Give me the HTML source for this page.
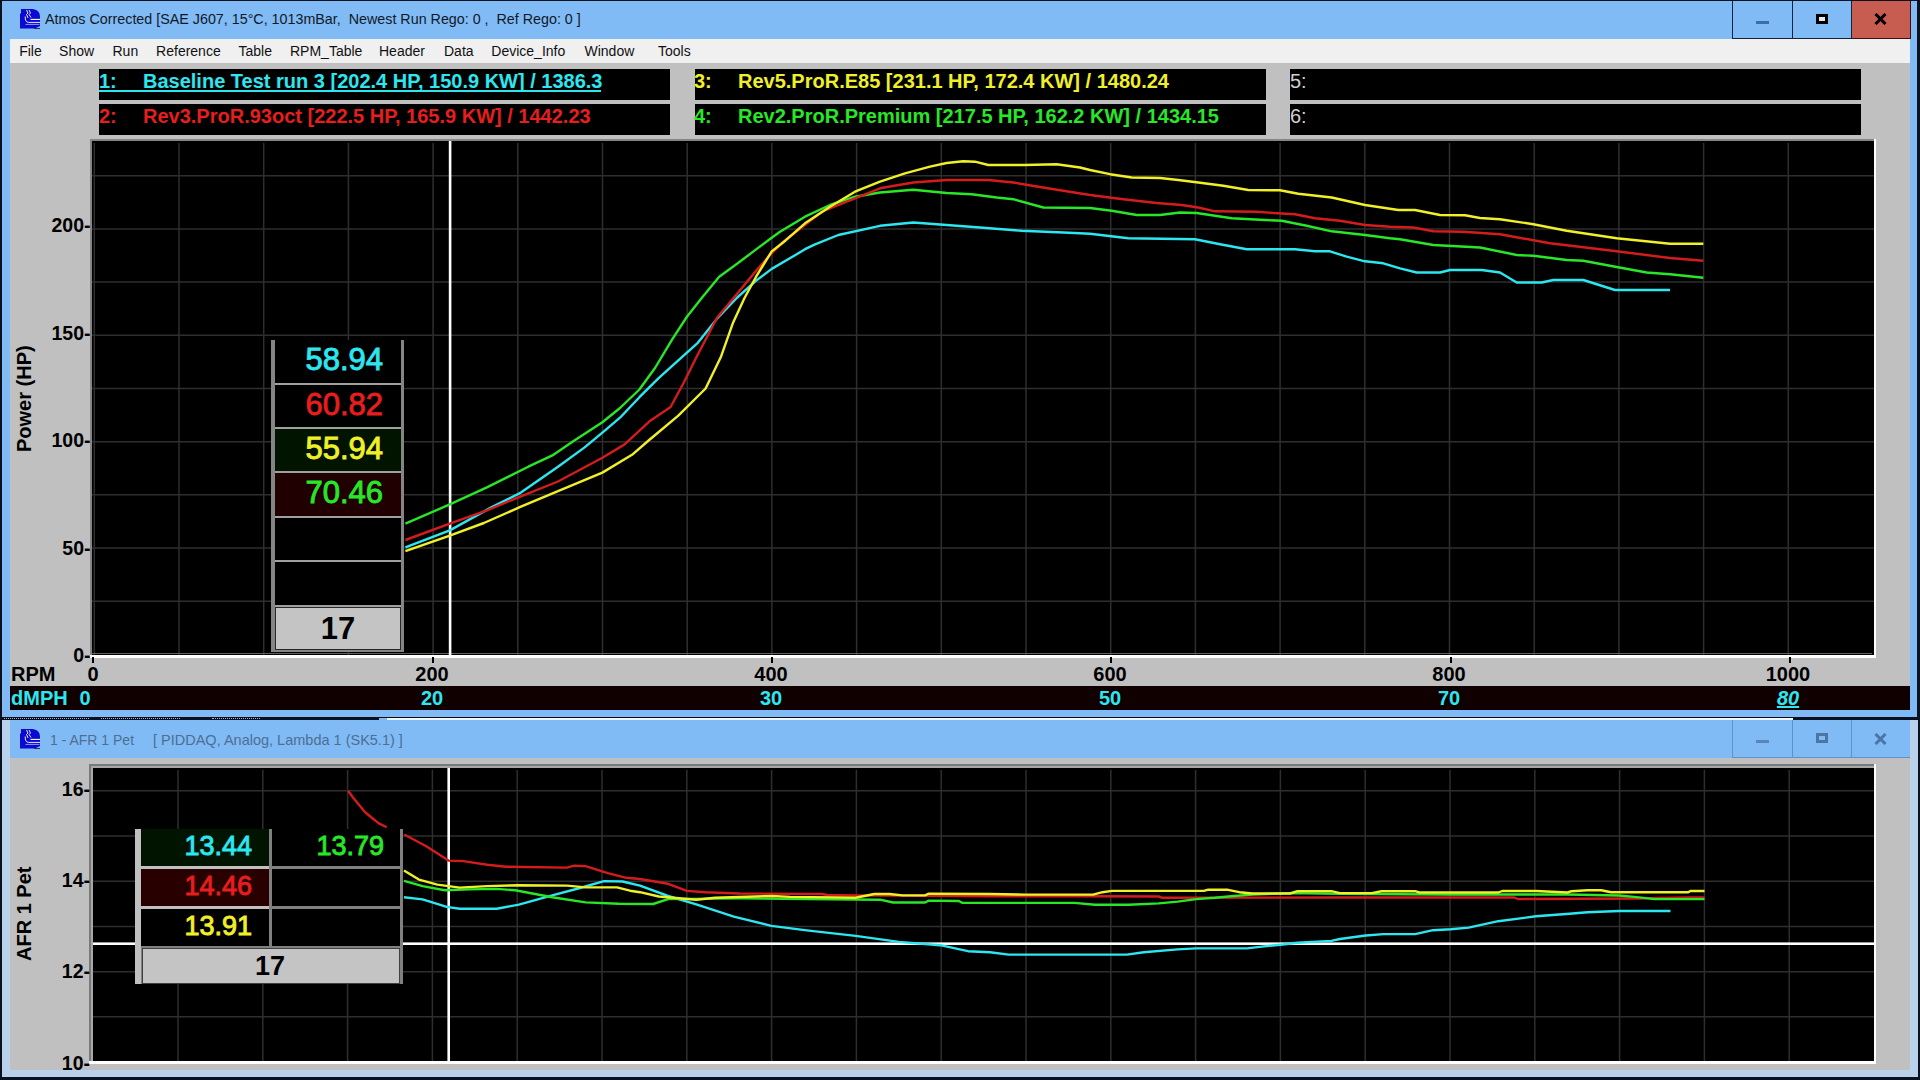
<!DOCTYPE html>
<html><head><meta charset="utf-8"><title>Dyno</title>
<style>
*{margin:0;padding:0;box-sizing:border-box}
html,body{width:1920px;height:1080px;overflow:hidden;background:#0a1220;font-family:"Liberation Sans",sans-serif}
.a{position:absolute}
.t{position:absolute;white-space:pre;line-height:1}
</style></head><body>

<div class="a" style="left:0;top:0;width:1920px;height:720px;background:#0a1220"></div>
<div class="a" style="left:2px;top:1px;width:1915px;height:716px;background:#80bbf6"></div>
<div class="a" style="left:10px;top:39px;width:1900px;height:24px;background:#f0f0f0"></div>
<div class="a" style="left:10px;top:63px;width:1900px;height:623px;background:#c0c0c0"></div>
<div class="a" style="left:10px;top:686px;width:1900px;height:24px;background:#100000"></div>
<div class="a" style="left:0;top:717px;width:1920px;height:3px;background:#0a1020"></div>
<div class="a" style="left:387px;top:718px;width:1406px;height:2px;background:#f4f8fc"></div>
<div class="a" style="left:379px;top:718px;width:8px;height:2px;background:#8ab8e8"></div>
<div class="a" style="left:4px;top:718px;width:85px;height:1px;border-top:1px dotted #a8b0c0"></div>
<div class="a" style="left:101px;top:718px;width:79px;height:1px;border-top:1px dotted #a8b0c0"></div>
<div class="a" style="left:212px;top:718px;width:48px;height:1px;border-top:1px dotted #a8b0c0"></div>
<svg class="a" style="left:20px;top:9px" width="20" height="20" viewBox="0 0 20 20">
<path d="M1,0 L13,0 Q20,1 20,8 L20,17 L15,19.6 L0,19.6 L0,4.5 L1,4.5 Z" fill="#0a0ad2"/>
<path d="M6.5,1 L8,4 L6.5,5.5 L8,9 M9,1 L10.5,4 L9,5.5 L11,8.5" stroke="#fff" stroke-width="1" fill="none" opacity="0.9"/>
<path d="M10.5,10.4 H20" stroke="#fff" stroke-width="1.1"/>
<path d="M5.2,7.5 Q5,13.4 8.5,13.4 H20" stroke="#e8e8ff" stroke-width="1" fill="none"/>
<path d="M5.5,15.4 H19.5" stroke="#b8b8ff" stroke-width="0.8"/>
<path d="M14,19.5 H20" stroke="#303050" stroke-width="1"/>
</svg>
<div class="t" style="left:45px;top:12px;font-size:14.3px;color:#111827">Atmos Corrected [SAE J607, 15°C, 1013mBar,  Newest Run Rego: 0 ,  Ref Rego: 0 ]</div>
<div class="a" style="left:1851px;top:1px;width:60px;height:38px;border-bottom:1px solid #3a1010;border-right:1px solid #3a1010;background:#c75c50"></div>
<div class="a" style="left:1732px;top:38px;width:120px;height:1px;background:#10243c"></div>
<div class="a" style="left:1732px;top:1px;width:1px;height:38px;background:#10243c"></div>
<div class="a" style="left:1792px;top:1px;width:1px;height:38px;background:#10243c"></div>
<div class="a" style="left:1851px;top:1px;width:1px;height:38px;background:#10243c"></div>
<div class="a" style="left:1756px;top:21px;width:13px;height:3px;background:#3c6ea6"></div>
<div class="a" style="left:1816px;top:14px;width:12px;height:10px;border:3px solid #000;background:#e0e8f0"></div>
<svg class="a" style="left:1874px;top:13px" width="13" height="12" viewBox="0 0 13 12"><path d="M1.5,1 L11.5,11 M11.5,1 L1.5,11" stroke="#000" stroke-width="3"/></svg>
<div class="t" style="left:19.2px;top:44px;font-size:14px;color:#111">File</div>
<div class="t" style="left:59.1px;top:44px;font-size:14px;color:#111">Show</div>
<div class="t" style="left:112.5px;top:44px;font-size:14px;color:#111">Run</div>
<div class="t" style="left:156.1px;top:44px;font-size:14px;color:#111">Reference</div>
<div class="t" style="left:238.5px;top:44px;font-size:14px;color:#111">Table</div>
<div class="t" style="left:290.0px;top:44px;font-size:14px;color:#111">RPM_Table</div>
<div class="t" style="left:379.0px;top:44px;font-size:14px;color:#111">Header</div>
<div class="t" style="left:444.0px;top:44px;font-size:14px;color:#111">Data</div>
<div class="t" style="left:491.3px;top:44px;font-size:14px;color:#111">Device_Info</div>
<div class="t" style="left:584.5px;top:44px;font-size:14px;color:#111">Window</div>
<div class="t" style="left:658.0px;top:44px;font-size:14px;color:#111">Tools</div>
<div class="a" style="left:99px;top:69px;width:571px;height:31px;background:#000"></div>
<div class="t" style="left:99px;top:71px;font-size:20px;font-weight:bold;color:#2ce6f0">1:</div>
<div class="t" style="left:143px;top:71px;font-size:20px;font-weight:bold;color:#2ce6f0">Baseline Test run 3 [202.4 HP, 150.9 KW] / 1386.3</div>
<div class="a" style="left:99px;top:90px;width:502px;height:2px;background:#2ce6f0"></div>
<div class="a" style="left:99px;top:104px;width:571px;height:31px;background:#000"></div>
<div class="t" style="left:99px;top:106px;font-size:20px;font-weight:bold;color:#e61e1e">2:</div>
<div class="t" style="left:143px;top:106px;font-size:20px;font-weight:bold;color:#e61e1e">Rev3.ProR.93oct [222.5 HP, 165.9 KW] / 1442.23</div>
<div class="a" style="left:695px;top:69px;width:571px;height:31px;background:#000"></div>
<div class="t" style="left:694px;top:71px;font-size:20px;font-weight:bold;color:#f0f028">3:</div>
<div class="t" style="left:738px;top:71px;font-size:20px;font-weight:bold;color:#f0f028">Rev5.ProR.E85 [231.1 HP, 172.4 KW] / 1480.24</div>
<div class="a" style="left:695px;top:104px;width:571px;height:31px;background:#000"></div>
<div class="t" style="left:694px;top:106px;font-size:20px;font-weight:bold;color:#28e628">4:</div>
<div class="t" style="left:738px;top:106px;font-size:20px;font-weight:bold;color:#28e628">Rev2.ProR.Premium [217.5 HP, 162.2 KW] / 1434.15</div>
<div class="a" style="left:1290px;top:69px;width:571px;height:31px;background:#000"></div>
<div class="t" style="left:1290px;top:71px;font-size:20px;font-weight:normal;color:#d0d0d0">5:</div>
<div class="a" style="left:1290px;top:104px;width:571px;height:31px;background:#000"></div>
<div class="t" style="left:1290px;top:106px;font-size:20px;font-weight:normal;color:#d0d0d0">6:</div>
<div class="a" style="left:90px;top:139px;width:1786px;height:519px;background:#fff"></div>
<div class="a" style="left:90px;top:139px;width:1784px;height:2px;background:#858585"></div>
<div class="a" style="left:90px;top:139px;width:2px;height:516px;background:#858585"></div>
<svg class="a" style="left:0;top:0" width="1920" height="1080" viewBox="0 0 1920 1080"><rect x="92" y="141" width="1782" height="514" fill="#000"/><path d="M94.3,143 V655 M179.0,143 V655 M263.7,143 V655 M348.4,143 V655 M433.1,143 V655 M517.8,143 V655 M602.5,143 V655 M687.2,143 V655 M771.9,143 V655 M856.6,143 V655 M941.3,143 V655 M1026.0,143 V655 M1110.7,143 V655 M1195.4,143 V655 M1280.1,143 V655 M1364.8,143 V655 M1449.5,143 V655 M1534.2,143 V655 M1618.9,143 V655 M1703.6,143 V655 M1788.3,143 V655 M92,601.21 H1874 M92,548.02 H1874 M92,494.84 H1874 M92,441.65 H1874 M92,388.46 H1874 M92,335.27 H1874 M92,282.09 H1874 M92,228.90 H1874 M92,175.71 H1874" stroke="#2e2e2e" stroke-width="1.5" fill="none"/><path d="M92,653.5 H1872" stroke="#606060" stroke-width="1"/><rect x="448.8" y="141" width="2.6" height="514" fill="#fff"/><path d="M405.4,523.7 L449.8,504.4 L486.9,487.4 L528.3,466.7 L553.5,454.8 L572.8,441.5 L602.4,422.2 L620.0,408.0 L639.4,389.5 L655.0,368.0 L672.5,338.9 L687.1,316.5 L701.7,298.0 L719.2,276.7 L736.7,264.0 L756.1,249.4 L771.7,237.8 L780.0,231.7 L805.0,216.7 L830.0,205.0 L855.0,196.7 L880.0,192.5 L913.3,189.7 L946.7,193.0 L971.7,194.2 L996.7,197.5 L1013.3,199.2 L1043.3,207.5 L1090.0,208.0 L1111.7,210.8 L1136.7,215.0 L1160.0,215.0 L1180.0,212.5 L1196.7,213.0 L1231.7,218.3 L1265.0,220.0 L1281.7,220.8 L1306.7,225.8 L1331.7,231.3 L1365.0,235.0 L1390.0,238.3 L1400.0,239.2 L1433.3,245.0 L1480.0,247.5 L1516.7,255.0 L1533.3,255.8 L1566.7,260.0 L1583.3,260.8 L1616.7,267.0 L1646.7,272.5 L1670.0,274.2 L1703.3,277.8" stroke="#28e628" stroke-width="2.4" fill="none" stroke-linejoin="round"/><path d="M405.4,547.4 L449.8,530.4 L491.3,507.4 L520.9,492.6 L558.0,466.7 L584.6,447.4 L602.4,432.6 L620.0,417.7 L639.4,397.2 L658.9,377.8 L678.3,360.3 L697.8,342.8 L717.2,318.5 L736.7,298.0 L756.1,280.6 L771.7,268.9 L795.0,255.3 L805.0,249.2 L814.5,244.6 L838.3,235.0 L880.0,225.8 L913.3,222.5 L946.7,225.0 L980.0,227.5 L1021.7,230.8 L1063.3,232.5 L1090.0,233.8 L1128.3,238.3 L1195.0,239.2 L1220.0,244.2 L1246.7,249.2 L1295.0,249.2 L1315.0,251.3 L1330.0,251.3 L1346.7,256.7 L1365.0,261.3 L1383.3,263.3 L1400.0,268.3 L1416.7,272.5 L1440.0,272.5 L1450.0,270.0 L1481.7,270.0 L1500.0,272.5 L1516.7,282.5 L1541.7,282.5 L1553.3,280.0 L1583.3,280.0 L1615.0,290.0 L1670.0,290.0" stroke="#2ce6f0" stroke-width="2.4" fill="none" stroke-linejoin="round"/><path d="M405.4,540.0 L449.8,523.7 L486.9,510.4 L520.9,496.3 L558.0,481.5 L602.4,457.8 L624.6,444.4 L649.2,421.6 L670.6,407.0 L684.2,381.7 L697.8,354.5 L717.2,317.5 L736.7,294.2 L756.1,270.8 L769.7,255.3 L783.4,241.7 L821.7,211.7 L855.0,198.3 L880.0,188.3 L913.3,182.5 L946.7,180.0 L988.3,180.0 L1013.3,182.5 L1038.3,186.7 L1063.3,190.8 L1090.0,195.0 L1123.3,199.2 L1156.7,203.0 L1181.7,205.0 L1198.3,207.5 L1215.0,211.3 L1256.7,211.7 L1273.3,213.0 L1295.0,214.2 L1315.0,218.3 L1340.0,220.8 L1365.0,225.0 L1390.0,226.7 L1413.3,227.5 L1433.3,231.3 L1463.3,231.7 L1500.0,234.2 L1550.0,243.3 L1616.7,251.3 L1670.0,258.0 L1703.3,260.8" stroke="#d41c1c" stroke-width="2.4" fill="none" stroke-linejoin="round"/><path d="M405.4,551.1 L449.8,535.6 L483.9,523.0 L520.9,506.7 L558.0,491.1 L602.4,472.6 L632.0,454.8 L649.2,440.0 L678.3,415.7 L705.6,388.5 L721.1,356.4 L732.8,323.3 L744.5,298.0 L756.1,276.7 L771.7,251.4 L785.3,240.7 L805.0,223.3 L830.0,206.7 L855.0,191.7 L880.0,181.7 L905.0,173.3 L930.0,166.7 L946.7,163.0 L963.3,161.2 L975.0,161.7 L988.3,165.0 L1025.0,165.0 L1056.7,164.2 L1080.0,167.5 L1090.0,170.0 L1110.0,174.2 L1131.7,177.5 L1160.0,178.0 L1178.3,180.0 L1198.3,182.5 L1223.3,185.8 L1248.3,190.0 L1280.0,190.3 L1298.3,193.7 L1331.7,197.5 L1365.0,205.0 L1398.3,210.0 L1415.0,210.0 L1440.0,215.0 L1465.0,215.3 L1480.0,218.0 L1500.0,219.2 L1533.3,224.2 L1566.7,230.8 L1616.7,238.3 L1670.0,243.7 L1703.3,243.7" stroke="#f0f028" stroke-width="2.4" fill="none" stroke-linejoin="round"/></svg>
<div class="t" style="left:0;width:90.5px;text-align:right;top:646.2px;font-size:19.5px;font-weight:bold;color:#000">0-</div>
<div class="t" style="left:0;width:90.5px;text-align:right;top:538.7px;font-size:19.5px;font-weight:bold;color:#000">50-</div>
<div class="t" style="left:0;width:90.5px;text-align:right;top:431.2px;font-size:19.5px;font-weight:bold;color:#000">100-</div>
<div class="t" style="left:0;width:90.5px;text-align:right;top:323.7px;font-size:19.5px;font-weight:bold;color:#000">150-</div>
<div class="t" style="left:0;width:90.5px;text-align:right;top:216.2px;font-size:19.5px;font-weight:bold;color:#000">200-</div>
<div class="t" style="left:14px;top:399px;font-size:20px;font-weight:bold;color:#000;transform:rotate(-90deg);transform-origin:0 0;"><span style="position:relative;left:-53px">Power (HP)</span></div>
<div class="a" style="left:92px;top:657px;width:2px;height:6px;background:#000"></div>
<div class="t" style="left:33px;width:120px;text-align:center;top:664px;font-size:20px;font-weight:bold;color:#000">0</div>
<div class="a" style="left:432px;top:657px;width:2px;height:6px;background:#000"></div>
<div class="t" style="left:372px;width:120px;text-align:center;top:664px;font-size:20px;font-weight:bold;color:#000">200</div>
<div class="a" style="left:771px;top:657px;width:2px;height:6px;background:#000"></div>
<div class="t" style="left:711px;width:120px;text-align:center;top:664px;font-size:20px;font-weight:bold;color:#000">400</div>
<div class="a" style="left:1110px;top:657px;width:2px;height:6px;background:#000"></div>
<div class="t" style="left:1050px;width:120px;text-align:center;top:664px;font-size:20px;font-weight:bold;color:#000">600</div>
<div class="a" style="left:1450px;top:657px;width:2px;height:6px;background:#000"></div>
<div class="t" style="left:1389px;width:120px;text-align:center;top:664px;font-size:20px;font-weight:bold;color:#000">800</div>
<div class="a" style="left:1789px;top:657px;width:2px;height:6px;background:#000"></div>
<div class="t" style="left:1728px;width:120px;text-align:center;top:664px;font-size:20px;font-weight:bold;color:#000">1000</div>
<div class="t" style="left:11px;top:663.5px;font-size:20px;font-weight:bold;color:#000">RPM</div>
<div class="t" style="left:11px;top:688px;font-size:20px;font-weight:bold;color:#2ce6f0">dMPH</div>
<div class="t" style="left:25px;width:120px;text-align:center;top:688px;font-size:20px;font-weight:bold;color:#2ce6f0;">0</div>
<div class="t" style="left:372px;width:120px;text-align:center;top:688px;font-size:20px;font-weight:bold;color:#2ce6f0;">20</div>
<div class="t" style="left:711px;width:120px;text-align:center;top:688px;font-size:20px;font-weight:bold;color:#2ce6f0;">30</div>
<div class="t" style="left:1050px;width:120px;text-align:center;top:688px;font-size:20px;font-weight:bold;color:#2ce6f0;">50</div>
<div class="t" style="left:1389px;width:120px;text-align:center;top:688px;font-size:20px;font-weight:bold;color:#2ce6f0;">70</div>
<div class="t" style="left:1728px;width:120px;text-align:center;top:688px;font-size:20px;font-weight:bold;color:#2ce6f0;font-style:italic;text-decoration:underline;">80</div>
<div class="a" style="left:271px;top:340px;width:133px;height:312px;background:#858585"></div>
<div class="a" style="left:275px;top:383px;width:126px;height:2px;background:#a0a0a0"></div>
<div class="a" style="left:275px;top:427px;width:126px;height:2px;background:#a0a0a0"></div>
<div class="a" style="left:275px;top:471px;width:126px;height:2px;background:#a0a0a0"></div>
<div class="a" style="left:275px;top:516px;width:126px;height:2px;background:#a0a0a0"></div>
<div class="a" style="left:275px;top:560px;width:126px;height:2px;background:#a0a0a0"></div>
<div class="a" style="left:275px;top:605px;width:126px;height:2px;background:#a0a0a0"></div>
<div class="a" style="left:275px;top:340px;width:126px;height:43px;background:#000"></div>
<div class="t" style="left:275px;width:108px;text-align:right;top:343.5px;font-size:31px;color:#2ce6f0;-webkit-text-stroke:0.9px #2ce6f0">58.94</div>
<div class="a" style="left:275px;top:385px;width:126px;height:42px;background:#000"></div>
<div class="t" style="left:275px;width:108px;text-align:right;top:388.5px;font-size:31px;color:#e61e1e;-webkit-text-stroke:0.9px #e61e1e">60.82</div>
<div class="a" style="left:275px;top:429px;width:126px;height:42px;background:#001400"></div>
<div class="t" style="left:275px;width:108px;text-align:right;top:432.5px;font-size:31px;color:#f0f028;-webkit-text-stroke:0.9px #f0f028">55.94</div>
<div class="a" style="left:275px;top:473px;width:126px;height:43px;background:#200000"></div>
<div class="t" style="left:275px;width:108px;text-align:right;top:476.5px;font-size:31px;color:#28e628;-webkit-text-stroke:0.9px #28e628">70.46</div>
<div class="a" style="left:275px;top:518px;width:126px;height:42px;background:#000"></div>
<div class="a" style="left:275px;top:562px;width:126px;height:43px;background:#000"></div>
<div class="a" style="left:275px;top:607px;width:126px;height:43px;background:#c4c4c4;border:1px solid #282828"></div>
<div class="t" style="left:275px;width:126px;text-align:center;top:612.5px;font-size:31px;font-weight:bold;color:#000">17</div>
<div class="a" style="left:0;top:720px;width:1920px;height:360px;background:#0a1220"></div>
<div class="a" style="left:2px;top:720px;width:1916px;height:357px;background:#b9d1ea"></div>
<div class="a" style="left:10px;top:720px;width:1900px;height:38px;background:#80bbf6"></div>
<div class="a" style="left:10px;top:758px;width:1900px;height:312px;background:#c0c0c0"></div>
<svg class="a" style="left:20px;top:729px" width="20" height="20" viewBox="0 0 20 20">
<path d="M1,0 L13,0 Q20,1 20,8 L20,17 L15,19.6 L0,19.6 L0,4.5 L1,4.5 Z" fill="#0a0ad2"/>
<path d="M6.5,1 L8,4 L6.5,5.5 L8,9 M9,1 L10.5,4 L9,5.5 L11,8.5" stroke="#fff" stroke-width="1" fill="none" opacity="0.9"/>
<path d="M10.5,10.4 H20" stroke="#fff" stroke-width="1.1"/>
<path d="M5.2,7.5 Q5,13.4 8.5,13.4 H20" stroke="#e8e8ff" stroke-width="1" fill="none"/>
<path d="M5.5,15.4 H19.5" stroke="#b8b8ff" stroke-width="0.8"/>
<path d="M14,19.5 H20" stroke="#303050" stroke-width="1"/>
</svg>
<div class="t" style="left:50px;top:733px;font-size:14px;color:#4e6e92">1 - AFR 1 Pet</div>
<div class="t" style="left:153px;top:733px;font-size:14.5px;color:#4e6e92">[ PIDDAQ, Analog, Lambda 1 (SK5.1) ]</div>
<div class="a" style="left:1732px;top:720px;width:61px;height:38px;border:1px solid #5f93c8;border-top:none"></div>
<div class="a" style="left:1792px;top:720px;width:60px;height:38px;border:1px solid #5f93c8;border-top:none;border-left:none"></div>
<div class="a" style="left:1851px;top:720px;width:59px;height:38px;border-bottom:1px solid #5f93c8"></div>
<div class="a" style="left:1756px;top:740px;width:13px;height:3px;background:#5a86b6"></div>
<div class="a" style="left:1816px;top:733px;width:12px;height:10px;border:3px solid #4a76a6"></div>
<svg class="a" style="left:1874px;top:733px" width="13" height="12" viewBox="0 0 13 12"><path d="M1.5,1 L11.5,11 M11.5,1 L1.5,11" stroke="#4a76a6" stroke-width="3"/></svg>
<div class="a" style="left:89px;top:764px;width:1787px;height:300px;background:#fff"></div>
<div class="a" style="left:89px;top:764px;width:1785px;height:2px;background:#7a7a7a"></div>
<div class="a" style="left:89px;top:764px;width:2px;height:297px;background:#7a7a7a"></div>
<div class="a" style="left:91px;top:766px;width:1783px;height:2px;background:#a8a8a8"></div>
<div class="a" style="left:91px;top:766px;width:2px;height:295px;background:#a8a8a8"></div>
<svg class="a" style="left:0;top:0" width="1920" height="1080" viewBox="0 0 1920 1080"><rect x="93" y="768" width="1781" height="293" fill="#000"/><path d="M178.0,770 V1061 M262.8,770 V1061 M347.6,770 V1061 M432.4,770 V1061 M517.2,770 V1061 M602.0,770 V1061 M686.8,770 V1061 M771.6,770 V1061 M856.4,770 V1061 M941.2,770 V1061 M1026.0,770 V1061 M1110.8,770 V1061 M1195.6,770 V1061 M1280.4,770 V1061 M1365.2,770 V1061 M1450.0,770 V1061 M1534.8,770 V1061 M1619.6,770 V1061 M1704.4,770 V1061 M1789.2,770 V1061 M93,1016.85 H1874 M93,971.63 H1874 M93,926.41 H1874 M93,881.19 H1874 M93,835.97 H1874 M93,790.75 H1874" stroke="#2e2e2e" stroke-width="1.5" fill="none"/><rect x="447.4" y="768" width="2.6" height="293" fill="#fff"/><rect x="93" y="942.4" width="1781" height="2.6" fill="#fff"/><path d="M348.1,790.7 L353.0,797.5 L359.4,805.3 L364.6,811.8 L372.4,818.2 L378.9,823.4 L386.7,827.3 M404.2,834.5 L426.3,846.3 L448.5,860.6 L463.3,861.1 L487.4,864.8 L505.9,866.7 L567.0,867.6 L574.4,865.7 L585.6,866.1 L607.8,873.1 L626.3,877.8 L640.0,879.0 L668.1,883.8 L686.9,890.9 L705.6,892.2 L739.4,893.5 L821.9,894.0 L827.5,895.0 L855.6,895.4 L990.0,896.3 L1093.1,896.3 L1158.8,896.5 L1162.5,897.8 L1340.0,897.5 L1514.2,897.5 L1518.1,899.1 L1636.9,898.5 L1688.3,897.5 L1704.5,897.5" stroke="#d41c1c" stroke-width="2.4" fill="none" stroke-linejoin="round"/><path d="M404.0,897.2 L422.6,899.4 L446.7,906.9 L459.6,908.7 L496.7,908.7 L518.9,904.6 L552.2,895.4 L580.0,888.0 L604.0,881.1 L622.6,881.5 L640.0,885.6 L668.1,896.0 L696.3,904.4 L733.8,916.6 L771.3,925.9 L808.8,930.6 L855.6,935.9 L898.8,941.9 L940.0,945.2 L968.1,951.2 L990.0,952.2 L1008.8,954.6 L1126.9,954.6 L1143.8,952.2 L1177.5,949.4 L1196.3,948.4 L1246.9,948.4 L1261.9,946.6 L1280.6,944.7 L1297.5,942.8 L1331.3,940.9 L1340.0,939.0 L1365.7,935.5 L1383.5,934.1 L1415.2,934.1 L1433.0,930.2 L1450.8,929.2 L1468.6,927.6 L1498.3,921.2 L1535.9,916.3 L1569.6,913.7 L1587.4,912.3 L1619.0,911.0 L1670.5,911.0" stroke="#2ce6f0" stroke-width="2.4" fill="none" stroke-linejoin="round"/><path d="M404.0,880.9 L422.6,886.1 L444.8,890.2 L468.9,889.4 L496.7,888.9 L515.2,890.2 L552.2,897.2 L585.6,902.4 L618.9,903.7 L653.1,904.0 L668.1,899.1 L739.4,898.4 L805.0,899.1 L880.0,899.7 L893.1,902.5 L925.0,902.5 L928.8,900.6 L958.8,901.0 L962.5,902.9 L1074.4,902.9 L1095.0,904.8 L1128.8,904.8 L1158.8,903.4 L1177.5,901.6 L1196.3,899.1 L1215.0,897.8 L1233.8,896.0 L1252.5,894.6 L1290.0,893.1 L1340.0,893.9 L1450.8,894.5 L1567.6,894.5 L1619.0,895.5 L1636.9,897.1 L1654.7,899.1 L1704.5,899.1" stroke="#28e628" stroke-width="2.4" fill="none" stroke-linejoin="round"/><path d="M404.0,870.4 L418.9,879.6 L437.4,884.6 L459.6,887.6 L487.4,886.1 L518.9,885.2 L567.0,885.6 L585.6,887.4 L617.0,887.4 L630.0,890.7 L640.0,892.2 L658.8,896.5 L696.3,899.7 L715.0,897.8 L771.3,896.0 L790.0,896.9 L855.6,897.8 L874.4,894.0 L889.4,894.0 L902.5,895.4 L925.0,895.4 L928.8,893.7 L990.0,894.0 L1025.6,894.6 L1093.1,894.6 L1102.5,892.2 L1111.9,890.9 L1203.8,890.9 L1207.5,889.8 L1228.1,889.8 L1239.4,892.2 L1252.5,893.5 L1290.0,893.5 L1297.5,891.2 L1331.3,891.2 L1340.0,893.1 L1371.7,893.1 L1381.6,891.2 L1415.2,891.2 L1419.2,892.5 L1498.3,892.5 L1502.3,891.0 L1535.9,891.0 L1567.6,892.5 L1571.5,891.2 L1587.4,890.2 L1601.2,890.2 L1611.1,892.2 L1688.3,892.2 L1690.3,891.0 L1704.5,891.0" stroke="#f0f028" stroke-width="2.4" fill="none" stroke-linejoin="round"/></svg>
<div class="t" style="left:0;width:90px;text-align:right;top:1053.5px;font-size:19.5px;font-weight:bold;color:#000">10-</div>
<div class="t" style="left:0;width:90px;text-align:right;top:962.2px;font-size:19.5px;font-weight:bold;color:#000">12-</div>
<div class="t" style="left:0;width:90px;text-align:right;top:870.9px;font-size:19.5px;font-weight:bold;color:#000">14-</div>
<div class="t" style="left:0;width:90px;text-align:right;top:779.6px;font-size:19.5px;font-weight:bold;color:#000">16-</div>
<div class="t" style="left:14px;top:913px;font-size:20px;font-weight:bold;color:#000;transform:rotate(-90deg);transform-origin:0 0;"><span style="position:relative;left:-48px">AFR 1 Pet</span></div>
<div class="a" style="left:135px;top:829px;width:268px;height:155px;background:#808080"></div>
<div class="a" style="left:135px;top:829px;width:6px;height:155px;background:#c0c0c0"></div>
<div class="a" style="left:141px;top:829px;width:128px;height:37px;background:#001400"></div>
<div class="a" style="left:272px;top:829px;width:128px;height:37px;background:#000"></div>
<div class="t" style="left:141px;width:111px;text-align:right;top:832.8px;font-size:27px;color:#2ce6f0;-webkit-text-stroke:0.9px #2ce6f0">13.44</div>
<div class="t" style="left:272px;width:112px;text-align:right;top:832.8px;font-size:27px;color:#28e628;-webkit-text-stroke:0.9px #28e628">13.79</div>
<div class="a" style="left:141px;top:869px;width:128px;height:37px;background:#280000"></div>
<div class="a" style="left:272px;top:869px;width:128px;height:37px;background:#000"></div>
<div class="t" style="left:141px;width:111px;text-align:right;top:872.8px;font-size:27px;color:#e61e1e;-webkit-text-stroke:0.9px #e61e1e">14.46</div>
<div class="a" style="left:141px;top:909px;width:128px;height:37px;background:#000"></div>
<div class="a" style="left:272px;top:909px;width:128px;height:37px;background:#000"></div>
<div class="t" style="left:141px;width:111px;text-align:right;top:912.8px;font-size:27px;color:#f0f028;-webkit-text-stroke:0.9px #f0f028">13.91</div>
<div class="a" style="left:141px;top:866px;width:128px;height:3px;background:#c0c0c0"></div>
<div class="a" style="left:141px;top:906px;width:128px;height:3px;background:#c0c0c0"></div>
<div class="a" style="left:142px;top:948px;width:258px;height:36px;background:#c4c4c4;border:1px solid #404040"></div>
<div class="t" style="left:141px;width:258px;text-align:center;top:952.5px;font-size:27px;font-weight:bold;color:#000">17</div>
</body></html>
